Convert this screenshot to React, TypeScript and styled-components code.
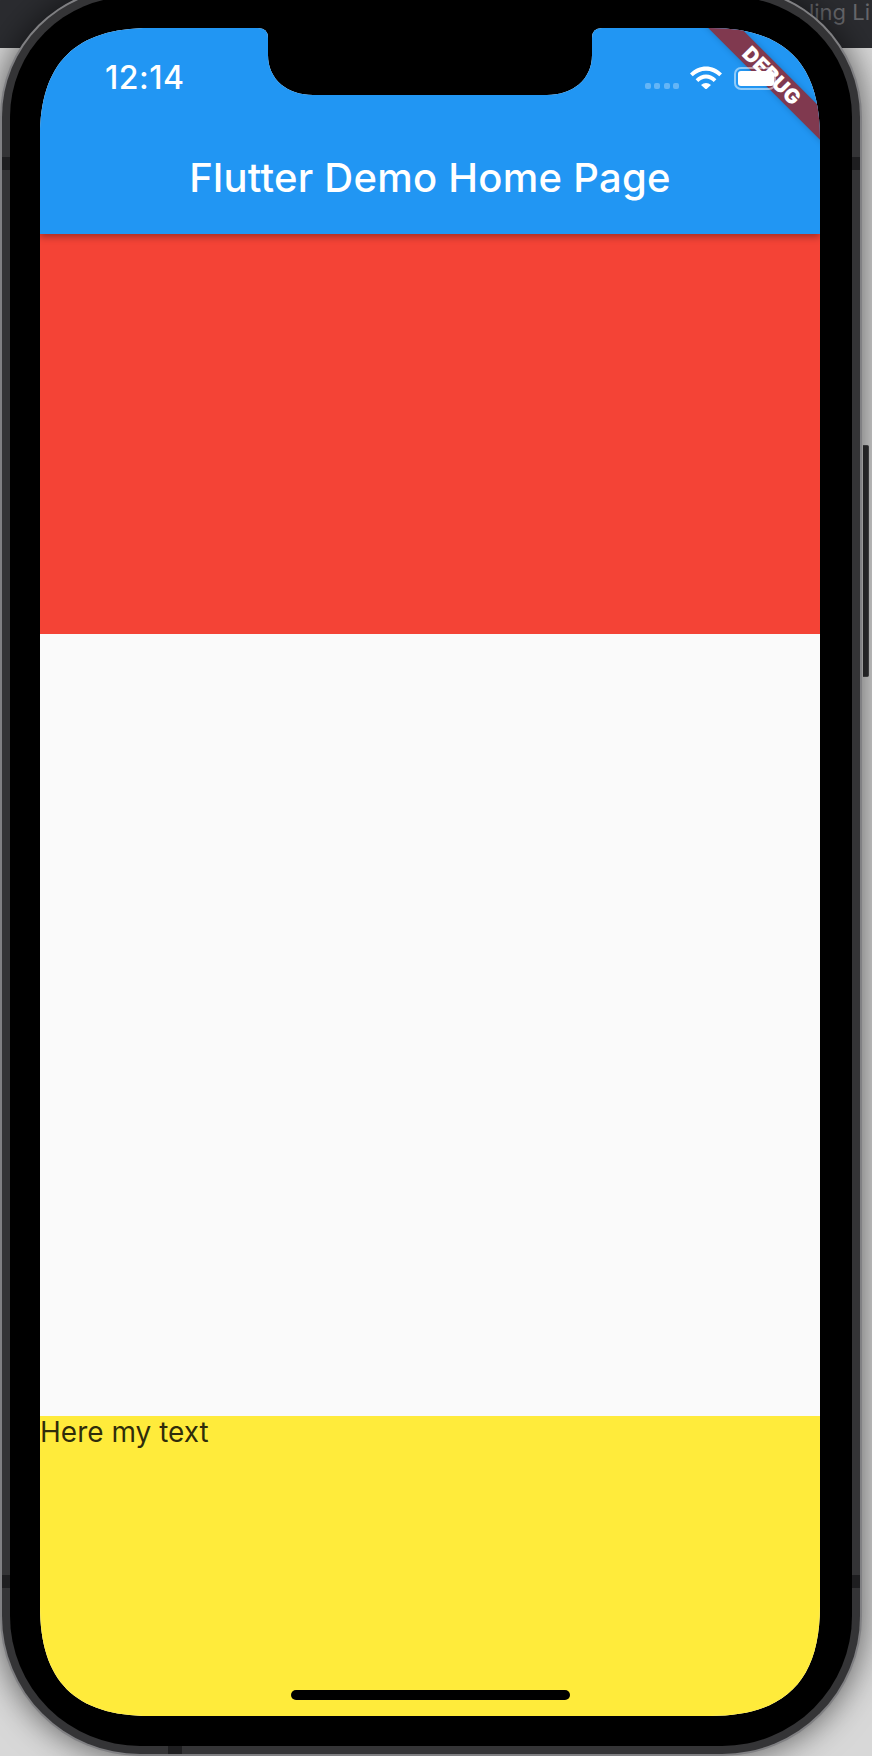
import React from "react";
import styled, { createGlobalStyle } from "styled-components";

const GlobalStyle = createGlobalStyle`
  html, body { margin: 0; padding: 0; background: #dcdcdc; }
  * { box-sizing: border-box; }
`;

const Stage = styled.div`
  position: relative;
  width: 872px;
  height: 1756px;
  overflow: hidden;
  background: #d8d8d8;
  font-family: Inter, "Liberation Sans", sans-serif;
`;

const HostBar = styled.div`
  height: 48px;
  background: #2b2c30;
  padding-right: 2px;
  color: #66676b;
  font-size: 22px;
  line-height: 25px;
  text-align: right;
  white-space: nowrap;
`;

const Phone = styled.div`
  position: absolute;
  left: 0;
  top: -13px;
  width: 862px;
  height: 1769px;
  padding: 2px;
  border-radius: 130px 130px 140px 140px;
  background: #808083;
  box-shadow: 0 0 34px rgba(0, 0, 0, 0.6);
`;

const Rim = styled.div`
  height: 100%;
  padding: 8px;
  border-radius: 128px 128px 138px 138px;
  background: #343436;
`;

const Bezel = styled.div`
  height: 100%;
  padding: 31px 32px 30px 30px;
  border-radius: 120px 120px 130px 130px;
  background: #000;
`;

const Screen = styled.div`
  position: relative;
  display: flex;
  flex-direction: column;
  width: 780px;
  height: 1688px;
  overflow: hidden;
  background: #fafafa;
  clip-path: path(
    "M 0 110 C 0 35 35 0 110 0 L 218 0 Q 228 0 228 10 L 228 27 C 228 52 248 67 273 67 L 507 67 C 532 67 552 52 552 27 L 552 10 Q 552 0 562 0 L 670 0 C 745 0 780 35 780 110 L 780 1578 C 780 1653 745 1688 670 1688 L 110 1688 C 35 1688 0 1653 0 1578 Z"
  );
`;

const AppBar = styled.header`
  position: relative;
  z-index: 1;
  flex: none;
  height: 206px;
  background: #2196f3;
  box-shadow: 0 3px 7px rgba(0, 0, 0, 0.32);
`;

const StatusBar = styled.div`
  position: relative;
  z-index: 1;
  display: flex;
  align-items: center;
  justify-content: space-between;
  height: 100px;
  padding: 0 44px 0 65px;
`;

const Clock = styled.span`
  color: #fff;
  font-size: 32px;
  font-weight: 500;
  line-height: 34px;
  letter-spacing: 0.5px;
`;

const StatusIcons = styled.div`
  display: flex;
  align-items: flex-end;
`;

const SignalDots = styled.div`
  display: flex;
  gap: 3.3px;
  margin: 0 11px 1px 0;
`;

const SignalDot = styled.i`
  width: 6px;
  height: 6px;
  border-radius: 2px;
  background: rgba(255, 255, 255, 0.3);
`;

const WifiGlyph = styled.svg`
  display: block;
  margin-bottom: 1px;
`;

const Battery = styled.div`
  width: 42px;
  height: 23px;
  margin-left: 12px;
  padding: 2px 0 2px 2px;
  border: 2px solid rgba(255, 255, 255, 0.5);
  border-radius: 7px;
`;

const BatteryFill = styled.div`
  height: 100%;
  border-radius: 3px;
  background: #fff;
`;

const Title = styled.h1`
  margin: 25px 0 0;
  color: #fff;
  font-size: 40px;
  font-weight: 500;
  line-height: 50px;
  letter-spacing: 0.25px;
  text-align: center;
`;

const Band = styled.section<{ $color: string; $height: number }>`
  flex: none;
  height: ${(p) => p.$height}px;
  background: ${(p) => p.$color};
`;

const BodyText = styled.p`
  margin: 0;
  color: rgba(0, 0, 0, 0.82);
  font-size: 28px;
  line-height: 32px;
`;

const DebugBanner = styled.div`
  position: absolute;
  left: 582px;
  top: 36px;
  width: 300px;
  height: 23px;
  transform: rotate(45deg);
  background: #80394f;
  box-shadow: 0 0 6px rgba(0, 0, 0, 0.2);
  color: #fff;
  font-size: 20.5px;
  font-weight: 900;
  line-height: 23px;
  letter-spacing: 0.3px;
  text-align: center;
`;

const HomeIndicator = styled.div`
  position: absolute;
  z-index: 2;
  left: 251px;
  bottom: 16px;
  width: 279px;
  height: 10px;
  border-radius: 5px;
  background: #000;
`;

const RimSeam = styled.i<{ $x: number; $y: number; $w: number; $h: number }>`
  position: absolute;
  left: ${(p) => p.$x}px;
  top: ${(p) => p.$y}px;
  width: ${(p) => p.$w}px;
  height: ${(p) => p.$h}px;
  background: #1e1e20;
`;

const SideButton = styled.div`
  position: absolute;
  left: 863px;
  top: 445px;
  width: 6px;
  height: 232px;
  border-radius: 0 2px 2px 0;
  background: #2f2f31;
  border: 1px solid #4a4a4c;
  border-left: none;
`;

const WifiIcon = () => (
  <WifiGlyph width="32" height="23" viewBox="0 0 32 23" fill="#fff" aria-hidden="true">
    <path d="M0 7.5C8.8 -2 23.2 -2 32 7.5L29.3 10.3C22 2.8 10 2.8 2.7 10.3Z" />
    <path d="M5.6 13.3C11.4 7 20.6 7 26.4 13.3L23.7 16.1C19.3 11.4 12.7 11.4 8.3 16.1Z" />
    <path d="M11 19C14 16.3 18 16.3 21 19L16 23.5Z" />
  </WifiGlyph>
);

export default function App() {
  return (
    <>
      <GlobalStyle />
      <Stage>
        <HostBar>ling Li</HostBar>
        <SideButton />
        <Phone>
          <Rim>
            <Bezel>
              <Screen>
                <AppBar>
                  <DebugBanner>DEBUG</DebugBanner>
                  <StatusBar>
                    <Clock>12:14</Clock>
                    <StatusIcons>
                      <SignalDots>
                        <SignalDot />
                        <SignalDot />
                        <SignalDot />
                        <SignalDot />
                      </SignalDots>
                      <WifiIcon />
                      <Battery>
                        <BatteryFill />
                      </Battery>
                    </StatusIcons>
                  </StatusBar>
                  <Title>Flutter Demo Home Page</Title>
                </AppBar>
                <Band $color="#f44336" $height={400} />
                <Band $color="#fafafa" $height={782} />
                <Band $color="#ffeb3b" $height={300}>
                  <BodyText>Here my text</BodyText>
                </Band>
                <HomeIndicator />
              </Screen>
            </Bezel>
          </Rim>
          <RimSeam $x={2} $y={170} $w={8} $h={13} />
          <RimSeam $x={852} $y={170} $w={8} $h={13} />
          <RimSeam $x={2} $y={1588} $w={8} $h={13} />
          <RimSeam $x={852} $y={1588} $w={8} $h={13} />
          <RimSeam $x={168} $y={1759} $w={14} $h={8} />
        </Phone>
      </Stage>
    </>
  );
}
